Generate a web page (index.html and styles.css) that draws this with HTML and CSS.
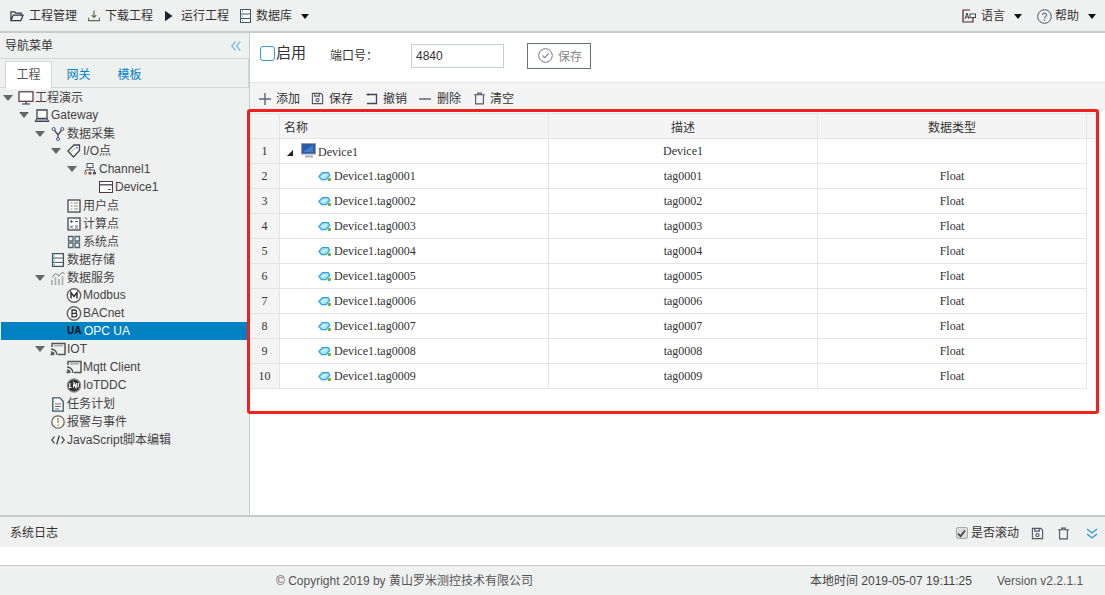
FILE: index.html
```html
<!DOCTYPE html>
<html>
<head>
	<meta charset="utf-8">
	<title>工程管理</title>
	<link rel="stylesheet" href="styles.css">
</head>
<body>
<svg class="defs" width="0" height="0">
	<symbol id="i-save" viewBox="0 0 14 14"><path d="M1.500 1.500h9l2 2v9h-11z M4 1.500v3h5v-3" fill="none" stroke="#556" stroke-width="1.200"/><circle cx="7" cy="8.700" r="1.700" fill="none" stroke="#556" stroke-width="1.200"/></symbol>
	<symbol id="i-trash" viewBox="0 0 14 14"><path d="M1 3h12M5 3V1.200h4V3M2.800 3v9.800h8.400V3" fill="none" stroke="#556" stroke-width="1.200"/></symbol>
	<symbol id="i-tag" viewBox="0 0 16 12"><path d="M1 6l4-4.500h6.500l2 3-4.500 5H4z" fill="#a8e2f6" stroke="#2aa4e0" stroke-width="1.400"/><path d="M4.500 6l5-2" stroke="#fff" stroke-width="1"/><circle cx="13" cy="9.500" r="2" fill="#6cb23c"/></symbol>
	<symbol id="i-list" viewBox="0 0 14 14"><rect x="1" y="1" width="12" height="12" fill="#fff" stroke="#445" stroke-width="1.300"/><path d="M3.500 4h2M7 4h4M3.500 7h2M7 7h4M3.500 10h2M7 10h4" stroke="#887" stroke-width="1"/></symbol>
	<symbol id="i-cast" viewBox="0 0 16 14"><path d="M2 5V1.500h13v11H8" fill="none" stroke="#555" stroke-width="1.500"/><path d="M1 7a6 6 0 0 1 6 6M1 10a3 3 0 0 1 3 3" fill="none" stroke="#555" stroke-width="1.400"/><circle cx="1.800" cy="12.200" r="1.200" fill="#555"/><rect x="4" y="3" width="9" height="1.500" fill="#aaa"/></symbol>
</svg>

<header class="topbar">
	<a class="menu"><svg width="14" height="12" viewBox="0 0 15 12"><path d="M1 11V1.500h4l1 1.500h6v2M1 11l2.500-6H14l-2.500 6z" fill="none" stroke="#334" stroke-width="1.300"/></svg>工程管理</a>
	<a class="menu"><svg width="12" height="12" viewBox="0 0 13 12"><path d="M6.500 0v7M4 5l2.500 2.500L9 5M.5 8v3h12V8" fill="none" stroke="#665" stroke-width="1.300"/></svg>下载工程</a>
	<a class="menu"><svg width="8" height="12" viewBox="0 0 9 12"><path d="M0 0l8.500 6L0 12z" fill="#223"/></svg>运行工程</a>
	<a class="menu"><svg width="11" height="14" viewBox="0 0 11 14"><rect x=".5" y=".5" width="10" height="13" fill="#fff" stroke="#456"/><path d="M.5 5h10M.5 9.500h10" stroke="#456"/><path d="M2 2.500h1M2 7h1M2 11.500h1" stroke="#39c"/></svg>数据库<i class="caret"></i></a>
	<div class="topright">
		<a class="menu"><svg width="14" height="14" viewBox="0 0 14 14"><path d="M8 1H1v12h10V9" fill="none" stroke="#523" stroke-width="1.200"/><path d="M3 10l2-6 2 6M3.800 8h2.500" fill="none" stroke="#445" stroke-width="1"/><rect x="8" y="5" width="5.500" height="3.500" fill="#fff" stroke="#445"/></svg>语言<i class="caret"></i></a>
		<a class="menu help"><svg width="15" height="15" viewBox="0 0 15 15"><circle cx="7.500" cy="7.500" r="6.800" fill="none" stroke="#456" stroke-width="1"/><path d="M5.500 6a2 2 0 1 1 3 1.700c-.7.400-1 .8-1 1.500" fill="none" stroke="#567" stroke-width="1.100"/><circle cx="7.500" cy="11" r=".8" fill="#567"/></svg>帮助<i class="caret"></i></a>
	</div>
</header>

<div class="main">
	<aside class="nav">
		<div class="navhead">
			<span>导航菜单</span>
			<svg width="10" height="10" viewBox="0 0 10 10"><path d="M4.500 .5L.8 5l3.700 4.500M9.200 .5L5.500 5l3.700 4.500" fill="none" stroke="#7ab8e4" stroke-width="1.200"/></svg>
		</div>
		<div class="tabs">
			<a class="tab on">工程</a>
			<a class="tab">网关</a>
			<a class="tab">模板</a>
		</div>
		<ul class="tree">
			<li class="lv0 zh"><i class="arrow"></i><svg width="16" height="14" viewBox="0 0 16 14"><rect x="1" y=".8" width="14" height="9.500" fill="#fff" stroke="#533" stroke-width="1.200"/><path d="M8 10.500v2M4 13h8" stroke="#335" stroke-width="1.200"/></svg>工程演示</li>
			<li class="lv1"><i class="arrow"></i><svg width="16" height="13" viewBox="0 0 15 13"><path d="M2.500 1h10v8.500h-10z" fill="#fff" stroke="#445" stroke-width="1.300"/><path d="M.5 12.500l2-3h10l2 3z" fill="#99a" stroke="#445"/></svg>Gateway</li>
			<li class="lv2 zh"><i class="arrow"></i><svg width="16" height="14" viewBox="0 0 13 14"><path d="M2.500 2.500L6.500 8l4-5.500M6.500 8v3" fill="none" stroke="#445" stroke-width="1.300"/><circle cx="2.200" cy="2" r="1.500" fill="#fff" stroke="#359"/><circle cx="10.800" cy="2" r="1.500" fill="#fff" stroke="#359"/><circle cx="6.500" cy="12" r="1.500" fill="#fff" stroke="#359"/></svg>数据采集</li>
			<li class="lv3"><i class="arrow"></i><svg width="16" height="14" viewBox="0 0 14 14"><path d="M1 7l6-6h5.500v5.500L6.500 13z" fill="#fff" stroke="#445" stroke-width="1.300"/><path d="M3.500 8.500L8.500 4" stroke="#c9a050"/><circle cx="10" cy="3.800" r="1" fill="#39c"/></svg>I/O点</li>
			<li class="lv4"><i class="arrow"></i><svg width="16" height="12" viewBox="0 0 13 12"><rect x="3.500" y=".5" width="6" height="4" fill="#fff" stroke="#556"/><path d="M6.500 4.500v2.500M2 9V7h9v2" fill="none" stroke="#556"/><rect x=".5" y="9" width="3" height="2.500" fill="#c9a050"/><rect x="5" y="9" width="3" height="2.500" fill="#556"/><rect x="9.500" y="9" width="3" height="2.500" fill="#556"/></svg>Channel1</li>
			<li class="lv5"><svg width="16" height="12" viewBox="0 0 14 12"><rect x=".5" y=".5" width="13" height="11" fill="#fff" stroke="#534"/><path d="M.5 3.800h13" stroke="#445" stroke-width="1.300"/><path d="M9 8.500h3" stroke="#557"/></svg>Device1</li>
			<li class="lv4 leaf zh"><svg width="16" height="14"><use href="#i-list"/></svg>用户点</li>
			<li class="lv4 leaf zh"><svg width="16" height="14" viewBox="0 0 14 14"><rect x="1" y="1" width="12" height="12" fill="#fff" stroke="#445" stroke-width="1.300"/><path d="M3 4.500h3M4.500 3v3M8 4.500h3M3 8.500l3 3M6 8.500l-3 3M8 9h3M8 11h3" stroke="#556" stroke-width=".9"/></svg>计算点</li>
			<li class="lv4 leaf zh"><svg width="16" height="14" viewBox="0 0 14 14"><path d="M1.500 1.500h4.500v4.500H1.500zM8 1.500h4.500v4.500H8zM1.500 8h4.500v4.500H1.500zM8 8h4.500v4.500H8z" fill="none" stroke="#567" stroke-width="1.300"/></svg>系统点</li>
			<li class="lv3 leaf zh"><svg width="16" height="14" viewBox="0 0 12 14"><rect x=".6" y=".6" width="10.800" height="12.800" fill="#fff" stroke="#356" stroke-width="1.300"/><path d="M.6 5h10.800M.6 9.400h10.800" stroke="#456"/><path d="M2 3h1M2 7.200h1M2 11.500h1" stroke="#39c"/></svg>数据存储</li>
			<li class="lv2 zh"><i class="arrow"></i><svg width="16" height="14" viewBox="0 0 14 14"><path d="M1 14V9M4.500 14V6M8 14V8M11.500 14V5" stroke="#aaa" stroke-width="1.600"/><path d="M1 6.500L4.500 2.500 8 5l3.500-4 2 2" fill="none" stroke="#777" stroke-width="1"/></svg>数据服务</li>
			<li class="lv4 leaf"><svg width="16" height="15" viewBox="0 0 15 15"><circle cx="7.500" cy="7.500" r="6.700" fill="#fff" stroke="#666" stroke-width="1.500"/><path d="M4.500 10.500v-6l3 4 3-4v6" fill="none" stroke="#333" stroke-width="1.500"/></svg>Modbus</li>
			<li class="lv4 leaf"><svg width="16" height="15" viewBox="0 0 15 15"><circle cx="7.500" cy="7.500" r="6.700" fill="#fff" stroke="#666" stroke-width="1.500"/><path d="M5.500 4h2.800a1.600 1.600 0 0 1 0 3.400H5.500h3.200a1.700 1.700 0 0 1 0 3.500H5.500z" fill="none" stroke="#333" stroke-width="1.300"/></svg>BACnet</li>
			<li class="lv4 leaf sel"><b class="ua">UA</b>OPC UA</li>
			<li class="lv2"><i class="arrow"></i><svg width="16" height="14"><use href="#i-cast"/></svg>IOT</li>
			<li class="lv4 leaf"><svg width="16" height="14"><use href="#i-cast"/></svg>Mqtt Client</li>
			<li class="lv4 leaf"><svg width="16" height="15" viewBox="0 0 15 15"><circle cx="7.500" cy="7.500" r="6.700" fill="#333" stroke="#999" stroke-width="1.300"/><path d="M3.500 5l-.5 4.500h2M7 9.500L7.500 5l2 4.500L10 5M12 5l-.5 4.500" fill="none" stroke="#fff" stroke-width="1.200"/></svg>IoTDDC</li>
			<li class="lv3 leaf zh"><svg width="16" height="15" viewBox="0 0 12 15"><path d="M.8 .8h7l3.400 3.400v10H.8z" fill="#fff" stroke="#356" stroke-width="1.300"/><path d="M3 7h6M3 9.500h6M3 12h4" stroke="#667"/></svg>任务计划</li>
			<li class="lv3 leaf zh"><svg width="16" height="14" viewBox="0 0 14 14"><circle cx="7" cy="7" r="6.200" fill="#fff" stroke="#665" stroke-width="1.300"/><path d="M7 3v5" stroke="#c83" stroke-width="1.500"/><circle cx="7" cy="10.300" r=".9" fill="#c83"/></svg>报警与事件</li>
			<li class="lv3 leaf zh"><svg width="16" height="10" viewBox="0 0 14 10"><path d="M3.500 1.500L.8 5l2.700 3.500M10.500 1.500L13.200 5l-2.700 3.500M8.300 .5L5.700 9.500" fill="none" stroke="#333" stroke-width="1.200"/></svg>JavaScript脚本编辑</li>
		</ul>
	</aside>

	<section class="content">
		<div class="form">
			<span class="check"></span><span class="enable">启用</span>
			<label class="portlabel">端口号：</label>
			<input class="port" value="4840">
			<button class="savebtn"><svg width="15" height="15" viewBox="0 0 15 15"><circle cx="7.500" cy="7.500" r="6.800" fill="none" stroke="#778" stroke-width="1"/><path d="M4.500 7.500l2.200 2.200 4-4.200" fill="none" stroke="#889" stroke-width="1.100"/></svg>保存</button>
		</div>
		<div class="tools">
			<a class="tool"><svg width="12" height="12" viewBox="0 0 12 12"><path d="M6 0v12M0 6h12" stroke="#567" stroke-width="1.400"/></svg>添加</a>
			<a class="tool"><svg width="13" height="13"><use href="#i-save"/></svg>保存</a>
			<a class="tool"><svg width="12" height="12" viewBox="0 0 12 12"><path d="M2 1.500h8.500v9H1" fill="none" stroke="#445" stroke-width="1.300"/><path d="M0 1.500l2.500-1.500v3z" fill="#445"/></svg>撤销</a>
			<a class="tool"><svg width="12" height="12" viewBox="0 0 12 12"><path d="M0 6h12" stroke="#667" stroke-width="1.500"/></svg>删除</a>
			<a class="tool"><svg width="13" height="13"><use href="#i-trash"/></svg>清空</a>
		</div>
		<div class="gridwrap">
			<table class="grid">
				<thead>
					<tr><th class="no"></th><th class="name">名称</th><th>描述</th><th>数据类型</th><th class="fill"></th></tr>
				</thead>
				<tbody>
					<tr><td class="no">1</td><td class="name"><i class="open"></i><svg class="monitor" width="15" height="15" viewBox="0 0 15 15"><rect x=".5" y=".5" width="14" height="10.500" fill="#2a5aa8" stroke="#99a"/><path d="M2 9L12 2v7z" fill="#3f7fc8"/><path d="M4 13.500h8" stroke="#aab" stroke-width="2"/></svg>Device1</td><td>Device1</td><td></td></tr>
					<tr><td class="no">2</td><td class="name tagcell"><svg width="14" height="11"><use href="#i-tag"/></svg>Device1.tag0001</td><td>tag0001</td><td>Float</td></tr>
					<tr><td class="no">3</td><td class="name tagcell"><svg width="14" height="11"><use href="#i-tag"/></svg>Device1.tag0002</td><td>tag0002</td><td>Float</td></tr>
					<tr><td class="no">4</td><td class="name tagcell"><svg width="14" height="11"><use href="#i-tag"/></svg>Device1.tag0003</td><td>tag0003</td><td>Float</td></tr>
					<tr><td class="no">5</td><td class="name tagcell"><svg width="14" height="11"><use href="#i-tag"/></svg>Device1.tag0004</td><td>tag0004</td><td>Float</td></tr>
					<tr><td class="no">6</td><td class="name tagcell"><svg width="14" height="11"><use href="#i-tag"/></svg>Device1.tag0005</td><td>tag0005</td><td>Float</td></tr>
					<tr><td class="no">7</td><td class="name tagcell"><svg width="14" height="11"><use href="#i-tag"/></svg>Device1.tag0006</td><td>tag0006</td><td>Float</td></tr>
					<tr><td class="no">8</td><td class="name tagcell"><svg width="14" height="11"><use href="#i-tag"/></svg>Device1.tag0007</td><td>tag0007</td><td>Float</td></tr>
					<tr><td class="no">9</td><td class="name tagcell"><svg width="14" height="11"><use href="#i-tag"/></svg>Device1.tag0008</td><td>tag0008</td><td>Float</td></tr>
					<tr><td class="no">10</td><td class="name tagcell"><svg width="14" height="11"><use href="#i-tag"/></svg>Device1.tag0009</td><td>tag0009</td><td>Float</td></tr>
				</tbody>
			</table>
			<div class="redbox"></div>
		</div>
	</section>
</div>

<div class="logbar">
	<span>系统日志</span>
	<div class="logtools">
		<span class="logcheck"><svg width="9" height="9" viewBox="0 0 9 9"><path d="M1 4.500l2.500 2.800L8 1.500" fill="none" stroke="#444" stroke-width="1.800"/></svg></span>
		<span class="scroll">是否滚动</span>
		<svg class="logsave" width="13" height="13"><use href="#i-save"/></svg>
		<svg class="logtrash" width="13" height="13"><use href="#i-trash"/></svg>
		<svg width="12" height="11" viewBox="0 0 12 11"><path d="M1 1l5 4 5-4M1 6l5 4 5-4" fill="none" stroke="#2b95dc" stroke-width="1.300"/></svg>
	</div>
</div>
<div class="logbody"></div>
<footer class="footer">
	<span class="copy">© Copyright 2019 by 黄山罗米测控技术有限公司</span>
	<span class="time">本地时间 2019-05-07 19:11:25</span>
	<span class="version">Version v2.2.1.1</span>
</footer>
</body>
</html>
```
FILE: styles.css
```css
*{ margin: 0;padding: 0;box-sizing: border-box; }
html,body{ height: 100%;overflow: hidden; }
body{ display: flex;flex-direction: column;font: 12px/18px "Liberation Sans","Noto Sans CJK SC",sans-serif;color: #333;background: #fff; }
ul{ list-style: none; }
svg{ flex: none; }
.defs{ position: absolute; }

/* top menu */
.topbar{ display: flex;align-items: center;height: 33px;padding: 1px 0 0 10px;background: #eff1f0;border-bottom: 2px solid #c9cbca; }
.menu{ display: flex;align-items: center;gap: 5px;margin-right: 11px; }
.topbar > .menu:nth-child(2){ margin-right: 12px; }
.topbar > .menu:nth-child(3){ gap: 8px; }
.caret{ width: 8px;height: 0;margin-left: 4px;border: 4px solid transparent;border-top: 5px solid #111;border-bottom: 0; }
.topright{ display: flex;margin-left: auto; }
.topright .menu:first-child{ margin-right: 15px; }
.topright .help{ gap: 3px;margin-right: 9px; }
.topright .help .caret{ margin-left: 6px; }

.main{ flex: 1;display: flex;min-height: 0; }

/* left tree */
.nav{ width: 250px;background: #eff1f0;border-right: 1px solid #c9cbca; }
.navhead{ display: flex;align-items: center;justify-content: space-between;height: 25px;padding: 0 8px 0 5px; }
.tabs{ display: flex;height: 30px;padding: 2px 0 0 5px;border: 1px solid #d5d7d6;border-width: 1px 1px 1px 0; }
.tab{ width: 47px;height: 28px;margin-right: 4px;text-align: center;line-height: 29px;color: #0081c2; }
.tab.on{ margin-right: 3px;background: #fff;color: #555;border: 1px solid #d5d7d6;border-bottom: 0;line-height: 27px; }
.tree li{ display: flex;align-items: center;height: 18px;color: #444;white-space: nowrap; }
.tree li.zh{ padding-top: 2px; }
.tree svg{ margin-right: 1px; }
.arrow{ width: 10px;height: 0;margin-right: 5px;border: 5px solid transparent;border-top: 6px solid #666;border-bottom: 0; }
.lv0{ padding-left: 3px; }
.lv1{ padding-left: 19px; }
.lv2{ padding-left: 35px; }
.lv3{ padding-left: 51px; }
.lv4{ padding-left: 67px; }
.lv5{ padding-left: 98px; }
.tree .lv3.leaf{ padding-left: 50px; }
.tree .lv4.leaf{ padding-left: 66px; }
.tree .sel{ margin: 0 2px 0 1px;padding-left: 65px;background: #0081c2;color: #fff; }
.ua{ width: 16px;margin-right: 1px;font-size: 10px;color: #111; }

/* right side */
.content{ flex: 1;display: flex;flex-direction: column;min-width: 0; }
.form{ display: flex;align-items: center;height: 50px;padding: 0 0 4px 10px;border-bottom: 1px solid #e4e4e4; }
.check{ width: 15px;height: 15px;margin-bottom: 5px;border: 1px solid #3a9ad9;border-radius: 3px; }
.enable{ margin: 0 25px 5px 1px;font-size: 15px; }
.portlabel{ width: 80px;margin-left: -1px; }
.port{ width: 93px;height: 24px;margin-left: 1px;padding-left: 4px;border: 1px solid #c5cfdc;font: 12px "Liberation Sans",sans-serif;color: #333; }
.savebtn{ display: flex;align-items: center;gap: 5px;width: 64px;height: 26px;margin-left: 23px;padding-left: 10px;background: #fff;border: 1px solid #666f7a;font: 12px "Liberation Sans","Noto Sans CJK SC",sans-serif;color: #888; }
.tools{ display: flex;align-items: center;height: 27px;padding: 4px 0 0 9px;background: #f4f4f4; }
.tool{ display: flex;align-items: center;gap: 5px;margin-right: 12px; }
.tool:nth-child(1){ margin-right: 11px; }
.tool:nth-child(2){ margin-right: 13px; }
.tool:nth-child(4){ gap: 6px; }
.tool:nth-child(5){ gap: 4px; }
.gridwrap{ flex: 1;position: relative;padding-top: 3px; }
.grid{ width: 847px;margin-left: -1px;table-layout: fixed;border-collapse: collapse;font: 12px "Liberation Serif","Noto Sans CJK SC",serif; }
.grid th{ width: 269px;height: 25px;background: #f4f4f4;border: 1px solid #e4e4e4;font: 12px "Liberation Sans","Noto Sans CJK SC",sans-serif; }
.grid th.name{ text-align: left;padding-left: 4px; }
.grid th.fill{ width: 10px;border-right: 0; }
.grid td{ height: 25px;border: 1px solid #e4e4e4;text-align: center; }
.grid .no{ width: 30px;background: #f4f4f4; }
.grid td.name{ text-align: left;padding-left: 7px; }
.grid td.tagcell{ padding-left: 38px; }
.grid td svg{ vertical-align: -2px;margin-right: 2px; }
.open{ display: inline-block;width: 0;height: 0;margin-right: 8px;border-left: 6px solid transparent;border-bottom: 6px solid #222; }
.redbox{ position: absolute;left: -3px;top: -1px;width: 852px;height: 305px;border: 3px solid #f5201b;border-radius: 3px; }

/* log + footer */
.logbar{ display: flex;align-items: center;justify-content: space-between;height: 32px;padding: 2px 7px 0 10px;background: #eff1f0;border-top: 2px solid #c9cbca; }
.logtools{ display: flex;align-items: center; }
.logcheck{ display: flex;align-items: center;justify-content: center;width: 12px;height: 12px;background: #ddd;border: 1px solid #aaa;border-radius: 2px; }
.scroll{ margin: 0 12px 0 3px; }
.logsave{ margin-right: 13px; }
.logtrash{ margin-right: 16px; }
.logbody{ height: 18px;background: #fff; }
.footer{ display: flex;align-items: center;height: 30px;padding-left: 276px;background: #eff1f0;border-top: 1px solid #c9cbca;color: #555; }
.copy{ width: 534px; }
.time{ width: 187px;color: #444; }
```
